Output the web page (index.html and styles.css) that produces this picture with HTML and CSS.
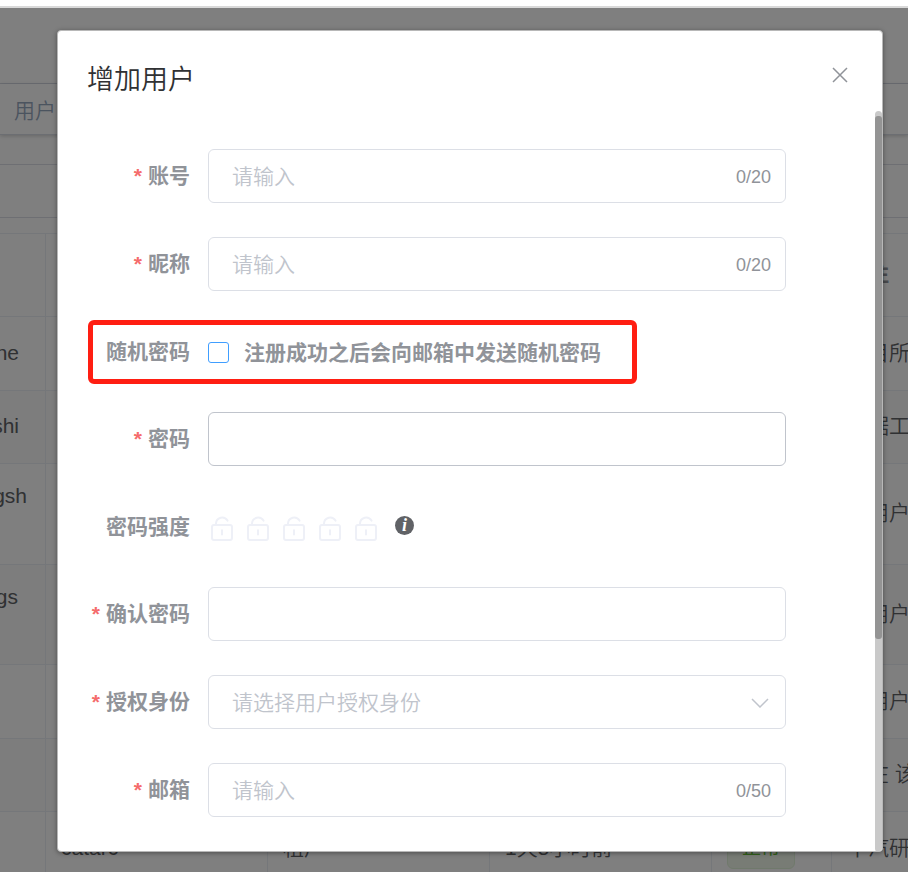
FILE: index.html
```
<!DOCTYPE html>
<html lang="zh-CN">
<head>
<meta charset="utf-8">
<title>增加用户</title>
<link rel="stylesheet" href="styles.css">
</head>
<body>
<svg class="defs" width="0" height="0">
  <symbol id="lock" viewBox="0 0 22 25">
    <g fill="none" stroke="currentColor" stroke-width="2" stroke-linecap="round" stroke-linejoin="round">
      <rect x="1" y="9" width="20" height="15" rx="2"/>
      <path d="M5 9V7.5A6.2 6.2 0 0 1 16.5 4.6M11 14.3V18.5"/>
    </g>
  </symbol>
</svg>
<div class="chrome"></div>
<div class="page">
  <div class="topbar"></div>
  <div class="tabs">用户</div>
  <div class="search"></div>
  <div class="table">
    <div class="row head"><div></div><div></div><div></div><div></div><div></div><div>备注</div></div>
    <div class="row r2"><div>ne</div><div></div><div></div><div></div><div></div><div>项目所</div></div>
    <div class="row r3 stripe"><div>shi</div><div></div><div></div><div></div><div></div><div>数据工</div></div>
    <div class="row r4"><div><p>gsh</p></div><div></div><div></div><div></div><div></div><div>租用户</div></div>
    <div class="row r5 stripe"><div><p>gs</p></div><div></div><div></div><div></div><div></div><div>租用户</div></div>
    <div class="row r6"><div></div><div></div><div></div><div></div><div></div><div>租用户</div></div>
    <div class="row r7 stripe"><div></div><div></div><div></div><div></div><div></div><div>正在 该</div></div>
    <div class="row r8"><div></div><div class="latin">catarc</div><div>租户</div><div>1天5小时前</div><div class="status"><span class="tag">正常</span></div><div>中汽研</div></div>
  </div>
</div>
<div class="overlay">
  <div class="dialog">
    <div class="dialog-head">
      <h1>增加用户</h1>
      <svg class="close" viewBox="0 0 16 16" width="16" height="16"><path d="M1 1L15 15M15 1L1 15" fill="none" stroke="#909399" stroke-width="1.5"/></svg>
    </div>
    <div class="dialog-body">
      <div class="form">
        <div class="item"><label class="req">账号</label><div class="input"><span class="ph">请输入</span><span class="count">0/20</span></div></div>
        <div class="item"><label class="req">昵称</label><div class="input"><span class="ph">请输入</span><span class="count">0/20</span></div></div>
        <div class="item marked"><label>随机密码</label><span class="checkbox"></span><span class="check-text">注册成功之后会向邮箱中发送随机密码</span></div>
        <div class="item"><label class="req">密码</label><div class="input hover"></div></div>
        <div class="item"><label>密码强度</label>
          <div class="locks">
            <svg><use href="#lock"/></svg><svg><use href="#lock"/></svg><svg><use href="#lock"/></svg><svg><use href="#lock"/></svg><svg><use href="#lock"/></svg>
          </div>
          <span class="info">i</span>
        </div>
        <div class="item"><label class="req">确认密码</label><div class="input"></div></div>
        <div class="item"><label class="req">授权身份</label><div class="input"><span class="ph">请选择用户授权身份</span>
          <svg class="arrow" viewBox="0 0 18 10" width="18" height="10"><path d="M1 1L9 9L17 1" fill="none" stroke="#c0c4cc" stroke-width="1.5"/></svg></div></div>
        <div class="item"><label class="req">邮箱</label><div class="input"><span class="ph">请输入</span><span class="count">0/50</span></div></div>
      </div>
      <div class="track"><div class="thumb"></div></div>
    </div>
  </div>
</div>
</body>
</html>
```

FILE: styles.css
```
*, *::before, *::after { box-sizing: border-box; }
html, body { height: 872px; overflow: hidden; }
body {
  margin: 0;
  position: relative;
  background: #fff;
  font-family: "Liberation Sans", "Noto Sans CJK SC", sans-serif;
  font-size: 21px;
  color: #606266;
}
.defs { position: absolute; }
.chrome { height: 8px; border-bottom: 2px solid #d9d9d9; }

.page { height: 864px; overflow: hidden; font-weight: 350; }
.topbar { height: 76px; border-bottom: 1px solid #d8dce5; }
.tabs {
  height: 51px;
  padding-left: 14px;
  line-height: 54px;
  color: #97a8be;
  border-bottom: 1px solid #d8dce5;
  box-shadow: 0 1px 4px rgba(0, 0, 0, .2);
}
.search { margin-top: 29px; height: 54px; border: 1px solid #dcdfe6; border-width: 1px 0; }
.table { margin-top: 15px; border-top: 1px solid #ebeef5; }
.row { display: grid; grid-template-columns: 46px 222px 222px 222px 120px 220px; border-bottom: 1px solid #ebeef5; }
.row > div {
  display: flex;
  align-items: center;
  padding: 0 0 6px 15px;
  border-right: 1px solid #ebeef5;
  white-space: nowrap;
}
.row > div:first-child { padding: 0 26px 2px 0; justify-content: flex-end; }
.row > .latin { padding-bottom: 2px; }
.row > .status { padding-bottom: 0; }
.row p { margin: 0 -8px 34px 0; }
.r5 p { margin-right: 1px; }
.stripe { background: #fafafa; }
.head { height: 83px; font-weight: bold; color: #909399; }
.r2 { height: 74px; }
.r3 { height: 73px; }
.r4 { height: 101px; }
.r5 { height: 100px; }
.r6 { height: 74px; }
.r7 { height: 73px; }
.r8 { height: 74px; }
.tag {
  height: 41px;
  padding: 0 14px;
  line-height: 38px;
  font-size: 19px;
  font-weight: 400;
  color: #67c23a;
  background: #f0f9eb;
  border: 1px solid #e1f3d8;
  border-radius: 6px;
}

.overlay {
  position: absolute;
  inset: 8px 0 0;
  padding: 22px 0 0 57px;
  background: rgba(0, 0, 0, .5);
}
.dialog {
  width: 826px;
  height: 822px;
  background: #fff;
  border: 1px solid #b8b8b8;
  border-radius: 4px;
  box-shadow: 0 1px 5px rgba(0, 0, 0, .4);
  overflow: hidden;
}
.dialog-head {
  display: flex;
  justify-content: space-between;
  height: 80px;
  padding: 28px 34px 0 29px;
}
.dialog-head h1 { margin: 0; font-size: 27px; line-height: 42px; font-weight: 350; color: #303133; }
.close { margin-top: 8px; }
.dialog-body { display: flex; justify-content: space-between; height: 741px; }
.form { display: grid; grid-auto-rows: 54px; gap: 33.67px; padding-top: 38.1px; width: 728px; height: 741px; }
.item { display: flex; align-items: center; position: relative; }
label { width: 132px; margin-right: 18px; padding-bottom: 4px; text-align: right; font-weight: bold; color: #909399; white-space: nowrap; }
.marked label { padding-bottom: 2px; }
.req::before { content: "*"; margin-right: 6px; color: #f56c6c; }
.input {
  display: flex;
  align-items: center;
  justify-content: space-between;
  width: 578px;
  height: 54px;
  padding: 0 14px 0 23px;
  border: 1px solid #dcdfe6;
  border-radius: 6px;
}
.hover { border-color: #c0c4cc; }
.ph { padding-bottom: 2px; font-weight: 350; color: #c0c4cc; }
.count { padding-top: 3px; font-size: 18px; color: #909399; }
.arrow { margin: 2px 2px 0 0; }
.marked::after {
  content: "";
  position: absolute;
  left: 30px;
  top: -4px;
  width: 549px;
  height: 64px;
  border: 5px solid #ff1e12;
  border-radius: 6px;
}
.checkbox { width: 21px; height: 21px; margin: 2px 15px 0 0; border: 1px solid #409eff; border-radius: 3px; }
.check-text { padding-bottom: 1px; font-weight: bold; color: #909399; }
.locks { display: flex; gap: 14px; margin: 4px 0 0 3px; color: #eef0f7; }
.locks svg { width: 22px; height: 25px; }
.info {
  width: 19px;
  height: 19px;
  margin: 0 0 2px 18px;
  border-radius: 50%;
  background: #606266;
  color: #fff;
  font: italic bold 18px/18px "Liberation Serif", serif;
  text-align: center;
}
.track { width: 7px; padding-top: 5px; background: #c9c9c9; border-radius: 4px; }
.thumb { height: 523px; background: #949494; border-radius: 3px; }
```
